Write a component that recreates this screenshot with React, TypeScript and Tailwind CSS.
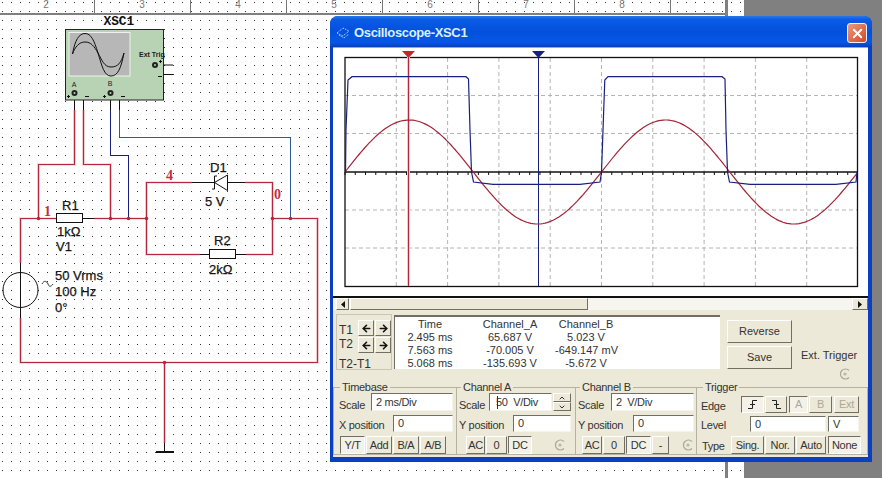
import { ArrowLeft, ArrowRight, ChevronDown, ChevronUp, X } from "lucide-react";
import type { ReactNode } from "react";

const RED = "#b3283c";
const GLOW = "#f9dede";
const NAVY = "#18207e";
const BLUE = "#2b5a9c";

const dots: [number, number][] = [];
for (let x = 2; x < 744; x += 9) {
  for (let y = 2; y < 478; y += 9) dots.push([x, y]);
}

const redWires = [
  "M74.5 110V164.5H38.5V218.5",
  "M83.5 110V164.5H110.5V218.5",
  "M20.5 263V218.5H56",
  "M94 218.5H146.5V182.5H192",
  "M245 182.5H272.5V254.5H246",
  "M200 254.5H146.5V218.5",
  "M272.5 218.5H317.5V362.5H20.5V318",
  "M164.5 362.5V443",
];

const blackWires = [
  "M74.5 93V110M74.5 93H83.5V110",
  "M110.5 93V110M110.5 93H119.5V110",
  "M155.5 65H173M155.5 65V74.5H173",
  "M192 182.5H214M228 182.5H245",
  "M82.5 218.5H94",
  "M200 254.5H209.5M235.5 254.5H246",
  "M20.5 263V318",
  "M164.5 443V451",
];

const junctions = [
  [38.5, 218.5],
  [110.5, 218.5],
  [128.5, 218.5],
  [146.5, 218.5],
  [272.5, 218.5],
  [290.5, 218.5],
  [164.5, 362.5],
];

const circuitLabels: [string, number, number][] = [
  ["R1", 62, 210],
  ["1kΩ", 57, 236],
  ["V1", 56, 251],
  ["50 Vrms", 55, 280],
  ["100 Hz", 55, 296],
  ["0°", 55, 312],
  ["D1", 210, 172],
  ["5 V", 205, 206],
  ["R2", 214, 245],
  ["2kΩ", 209, 274],
];

function sinePath() {
  const pts: string[] = [];
  for (let x = 345; x <= 857; x += 2) {
    const y = 172 - 52 * Math.sin(((x - 345) * 2 * Math.PI) / 256.5);
    pts.push(`${x} ${y.toFixed(1)}`);
  }
  return "M" + pts.join("L");
}

const squarePath =
  "M345.5 172L346 130L348 80L352 76.7H466L468.5 79L470 130L471.5 172L473.5 182L493 184.3H580L600 182L601.5 172L603 130L604.8 80L608 76.7H722L725 79L726 130L727.5 172L729.5 182L750 184.3H836L856 182L857 172";

const gridX = [396.3, 447.6, 498.9, 550.2, 601.5, 652.8, 704.1, 755.4, 806.7];
const gridY = [95.5, 133.5, 210, 248];
const ticks: number[] = [];
for (let x = 345; x < 857; x += 10.26) ticks.push(x);

const rows = [
  ["Time", "Channel_A", "Channel_B"],
  ["2.495 ms", "65.687 V", "5.023 V"],
  ["7.563 ms", "-70.005 V", "-649.147 mV"],
  ["5.068 ms", "-135.693 V", "-5.672 V"],
];

function Circuit() {
  return (
    <svg width={744} height={478} className="block">
      {dots.map(([x, y]) => (
        <rect key={`${x}-${y}`} x={x} y={y} width={1} height={1} fill="#333" />
      ))}

      {/* ruler */}
      {[94.5, 190.5, 286.5, 382.5, 478.5, 574.5, 670.5].map((x) => (
        <line key={x} x1={x} x2={x} y1={0} y2={13} stroke="#777" />
      ))}
      {[2, 3, 4, 5, 6, 7, 8].map((n, i) => (
        <text key={n} x={46 + i * 96} y={8} fontSize={10} fill="#777" textAnchor="middle" fontFamily="Liberation Sans">
          {n}
        </text>
      ))}
      <rect x={0} y={13} width={725} height={2} fill="#808080" />
      <rect x={725} y={0} width={3} height={478} fill="#808080" />

      {/* wires */}
      {redWires.map((d) => (
        <path key={d} d={d} fill="none" stroke={GLOW} strokeWidth={3} />
      ))}
      {redWires.map((d) => (
        <path key={d} d={d} fill="none" stroke={RED} strokeWidth={1.2} />
      ))}
      <path d="M110.5 110V155.5H128.5V218.5" fill="none" stroke={NAVY} />
      <path d="M119.5 110V137.5H290.5V218.5" fill="none" stroke={BLUE} />
      {blackWires.map((d) => (
        <path key={d} d={d} fill="none" stroke="#111" />
      ))}
      {junctions.map(([x, y]) => (
        <circle key={`${x}-${y}`} cx={x} cy={y} r={1.8} fill={RED} />
      ))}

      {/* scope symbol */}
      <rect x={65.5} y={29.5} width={98} height={70.5} fill="#b8d3b4" stroke="#222" />
      <rect x={69} y={32.5} width={61} height={43.5} fill="#b7b7b7" stroke="#eef2ee" />
      <path d="M72.5 54C75 40 79 33.5 85 33.5S94 40 98 53S104 76 111 76S121 68 124 53" fill="none" stroke="#111" />
      <path d="M72.5 54C75 47 79 42 85 42S94 46 98 53S104 67 111 67S121 63 124 53" fill="none" stroke="#111" />
      <text x={103.5} y={25} fontSize={12.8} fontWeight={700} fill="#111" fontFamily="Liberation Mono">
        XSC1
      </text>
      <text x={139} y={57} fontSize={7} fontWeight={700} fill="#222" fontFamily="Liberation Sans">
        Ext Trig
      </text>
      <text x={74} y={87} fontSize={7} fill="#222" textAnchor="middle" fontFamily="Liberation Sans">A</text>
      <text x={110} y={86} fontSize={7} fill="#222" textAnchor="middle" fontFamily="Liberation Sans">B</text>
      {[
        [74.5, 93],
        [110.5, 93],
        [155, 65],
      ].map(([x, y]) => (
        <g key={x}>
          <circle cx={x} cy={y} r={3} fill="#222" />
          <circle cx={x} cy={y} r={1} fill="#b8d3b4" />
        </g>
      ))}
      <path d="M67 96.5h3M68.5 95v3M103 96.5h3M104.5 95v3M159 61.5h3M160.5 60v3" stroke="#111" />
      <path d="M85 96.5h4M121 96.5h4M158 76.5h4" stroke="#111" strokeWidth={1.2} />

      {/* R1, R2 */}
      <rect x={56.5} y={213.5} width={26} height={9} fill="#fff" stroke="#111" />
      <rect x={209.5} y={249.5} width={26} height={9} fill="#fff" stroke="#111" />

      {/* zener */}
      <path d="M227.5 175V190.5L214.5 182.5ZM217 176H214.5V189H212" fill="#fff" stroke="#111" />

      {/* source */}
      <circle cx={20.5} cy={290} r={17.5} fill="none" stroke="#111" />
      <path d="M42 284C44 280 47 281 48 284S51 287 53 284" fill="none" stroke="#333" />

      {/* ground */}
      <rect x={156} y={451} width={18} height={2} fill="#111" />

      {circuitLabels.map(([t, x, y]) => (
        <text key={t} x={x} y={y} fontSize={13} fill="#111" stroke="#222" strokeWidth={0.25} fontFamily="Liberation Sans">
          {t}
        </text>
      ))}
      {[
        ["1", 44, 216],
        ["4", 166, 180],
        ["0", 274, 199],
      ].map(([t, x, y]) => (
        <text key={t} x={x} y={y} fontSize={14} fontWeight={700} fill="#c22f3d" fontFamily="Liberation Serif">
          {t}
        </text>
      ))}
    </svg>
  );
}

function Plot() {
  return (
    <svg width={535} height={249} viewBox="333 47 535 249" className="block bg-white">
      <line x1={333} x2={868} y1={47.5} y2={47.5} stroke="#aca899" />
      {gridX.map((x) => (
        <line key={x} x1={x} x2={x} y1={58} y2={286} stroke="#b4b4b4" strokeDasharray="4 3" />
      ))}
      {gridY.map((y) => (
        <line key={y} x1={345} x2={857} y1={y} y2={y} stroke="#b4b4b4" strokeDasharray="4 3" />
      ))}
      <rect x={345} y={57.5} width={512.5} height={229} fill="none" stroke="#111" strokeWidth={1.3} />
      <line x1={345} x2={857} y1={172} y2={172} stroke="#111" strokeWidth={1.4} />
      {ticks.map((x) => (
        <line key={x} x1={x} x2={x} y1={172} y2={175} stroke="#111" />
      ))}
      <line x1={408.5} x2={408.5} y1={57} y2={286} stroke="#f6c9c9" strokeWidth={3} />
      <line x1={408.5} x2={408.5} y1={57} y2={286} stroke={RED} />
      <line x1={538.5} x2={538.5} y1={57} y2={286} stroke={NAVY} />
      <path d="M402 51H415L408.5 58Z" fill="#c4252f" />
      <path d="M532 51H545L538.5 58Z" fill={NAVY} />
      <path d={sinePath()} fill="none" stroke="#a32236" strokeWidth={1.2} />
      <path d={squarePath} fill="none" stroke={NAVY} strokeWidth={1.2} />
    </svg>
  );
}

function Btn({ children, pressed, dim, className }: { children: ReactNode; pressed?: boolean; dim?: boolean; className: string }) {
  return (
    <div
      className={
        "flex shrink-0 items-center justify-center border text-[11px] " +
        (pressed
          ? "border-t-[#716f64] border-l-[#716f64] border-b-white border-r-white bg-[#f4f2e8] "
          : "border-t-white border-l-white border-b-[#716f64] border-r-[#716f64] bg-[#ece9d8] ") +
        (dim ? "text-[#aca899] " : "text-[#333] ") +
        className
      }
    >
      {children}
    </div>
  );
}

function Field({ children, className }: { children: ReactNode; className: string }) {
  return (
    <div className={"relative flex shrink-0 items-center border border-t-[#716f64] border-l-[#716f64] border-b-[#f5f3ea] border-r-[#f5f3ea] bg-white pl-1 text-[11px] text-[#333] " + className}>
      {children}
    </div>
  );
}

function Group({ title, left, className, children }: { title: string; left: string; className: string; children: ReactNode }) {
  return (
    <div className={"relative h-[68px] shrink-0 border border-[#b5b2a2] " + className}>
      <span className={"absolute -top-[8px] bg-[#ece9d8] px-[2px] text-[11px] leading-[14px] text-[#333] " + left}>{title}</span>
      {children}
    </div>
  );
}

function Radio() {
  return (
    <svg width={12} height={12} viewBox="0 0 12 12" className="shrink-0">
      <path d="M10 2.5A5 5 0 1 0 10 9.5" fill="none" stroke="#a9a799" strokeWidth={1.2} />
      <circle cx={6} cy={6} r={1.6} fill="#b9b7a8" />
    </svg>
  );
}

function EdgeIcon({ falling }: { falling?: boolean }) {
  return (
    <svg width={11} height={11} viewBox="0 0 11 11">
      <path d={falling ? "M1 1.5H5.5V9.5H10M3 5.5H8" : "M1 9.5H5.5V1.5H10M3 5.5H8"} fill="none" stroke="#222" />
    </svg>
  );
}

function Scope() {
  return (
    <div className="absolute left-[330px] top-[16px] flex h-[446px] w-[542px] flex-col rounded-t-[8px] bg-[#0a3fc4]">
      {/* title bar */}
      <div className="flex h-[31px] shrink-0 items-center rounded-t-[8px] bg-[linear-gradient(180deg,#2a78e8_0%,#0a5be6_12%,#0350dd_50%,#0458e6_85%,#0a3fb8_100%)] pl-[6px] pr-[5px] pt-[3px]">
        <svg width={14} height={12} viewBox="0 0 14 12" className="shrink-0">
          <path d="M1 6L7 1L13 4L7 9ZM3 8L8 11L13 7" fill="none" stroke="#cfe2f8" strokeDasharray="1 1" />
        </svg>
        <span className="ml-[4px] text-[13px] font-bold tracking-[-0.35px] text-[#dcefff]">Oscilloscope-XSC1</span>
        <div className="ml-auto flex h-[20px] w-[20px] items-center justify-center rounded-[3px] border border-[#f2f2f2] bg-[linear-gradient(135deg,#e99b80,#cf4a26)]">
          <X size={15} strokeWidth={3} color="#fff" />
        </div>
      </div>

      <div className="ml-[3px] mr-[4px] flex h-[410px] flex-col bg-[#ece9d8]">
        <Plot />
        <div className="h-[2px] bg-[#111]" />
        {/* scrollbar */}
        <div className="flex h-[12px] items-stretch bg-[#f6f5ef]">
          <Btn className="ml-[3px] w-[13px]">
            <svg width={4} height={7} viewBox="0 0 4 7"><path d="M4 0V7L0 3.5Z" fill="#111" /></svg>
          </Btn>
          <div className="ml-[1px] w-[238px] border border-t-white border-l-white border-b-[#716f64] border-r-[#716f64] bg-[#ece9d8]" />
          <Btn className="ml-auto w-[16px]">
            <svg width={4} height={7} viewBox="0 0 4 7"><path d="M0 0V7L4 3.5Z" fill="#111" /></svg>
          </Btn>
        </div>

        {/* readout */}
        <div className="ml-[3px] mt-[4px] flex h-[56px] shrink-0 text-[11px] text-[#333]">
          <div className="w-[56px] shrink-0 border border-[#c9c6b4] pl-[2px] pt-[5px]">
            <div className="flex h-[16px] items-center">
              <span className="w-[19px] pt-[3px] text-[12px]">T1</span>
              <Btn className="h-[16px] w-[16px]"><ArrowLeft size={11} strokeWidth={3.5} color="#111" /></Btn>
              <Btn className="ml-[1px] h-[16px] w-[16px]"><ArrowRight size={11} strokeWidth={3.5} color="#111" /></Btn>
            </div>
            <div className="mt-[1px] flex h-[16px] items-center">
              <span className="w-[19px] pb-[2px] text-[12px]">T2</span>
              <Btn className="h-[16px] w-[16px]"><ArrowLeft size={11} strokeWidth={3.5} color="#111" /></Btn>
              <Btn className="ml-[1px] h-[16px] w-[16px]"><ArrowRight size={11} strokeWidth={3.5} color="#111" /></Btn>
            </div>
            <div className="mt-[4px] text-[12px] leading-[14px]">T2-T1</div>
          </div>
          <div className="ml-[2px] mt-[1px] grid h-[54px] w-[326px] shrink-0 grid-cols-[70px_90px_62px] content-start border-t-2 border-l border-t-[#716f64] border-l-[#716f64] bg-white pt-[1px] text-center leading-[13px]">
            {rows.flat().map((c) => (
              <div key={c} className="whitespace-nowrap">{c}</div>
            ))}
          </div>
          <div className="ml-[7px] mt-[6px] flex w-[65px] shrink-0 flex-col gap-[3px]">
            <Btn className="h-[23px] w-[65px]">Reverse</Btn>
            <Btn className="h-[23px] w-[65px]">Save</Btn>
          </div>
          <div className="ml-[9px] flex flex-col items-start pt-[35px]">
            <span className="whitespace-nowrap text-[11px] leading-[13px]">Ext. Trigger</span>
            <div className="ml-[38px] mt-[6px]"><Radio /></div>
          </div>
        </div>

        {/* controls */}
        <div className="mt-[17px] flex text-[11px] tracking-[-0.3px] text-[#333]">
          <Group title="Timebase" left="left-[6px]" className="w-[124px]">
            <div className="mt-[5px] flex h-[18px] items-center pl-[5px]">
              <span className="w-[32px] pt-[6px]">Scale</span>
              <Field className="h-[18px] w-[82px]">2 ms/Div</Field>
            </div>
            <div className="mt-[4px] flex h-[17px] items-center pl-[5px]">
              <span className="w-[54px] pt-[4px]">X position</span>
              <Field className="h-[17px] w-[60px]">0</Field>
            </div>
            <div className="mt-[4px] flex h-[18px] items-center gap-[1px] pl-[6px]">
              <Btn pressed className="h-[18px] w-[25px]">Y/T</Btn>
              <Btn className="h-[18px] w-[26px]">Add</Btn>
              <Btn className="h-[18px] w-[26px]">B/A</Btn>
              <Btn className="h-[18px] w-[26px]">A/B</Btn>
            </div>
          </Group>

          <Group title="Channel A" left="left-[4px]" className="w-[119px] border-l-0">
            <div className="mt-[5px] flex h-[18px] items-center pl-[2px]">
              <span className="w-[30px] pt-[6px]">Scale</span>
              <Field className="h-[18px] w-[63px]">
                <span className="ml-[2px]">50&nbsp; V/Div</span>
                <span className="absolute left-[7px] top-[2px] h-[13px] w-px bg-[#333]" />
              </Field>
              <div className="ml-[1px] flex w-[18px] flex-col">
                <Btn className="h-[9px] w-[18px]"><ChevronUp size={8} strokeWidth={3} /></Btn>
                <Btn className="h-[9px] w-[18px]"><ChevronDown size={8} strokeWidth={3} /></Btn>
              </div>
            </div>
            <div className="mt-[4px] flex h-[17px] items-center pl-[2px]">
              <span className="w-[54px] pt-[4px]">Y position</span>
              <Field className="h-[17px] w-[58px]">0</Field>
            </div>
            <div className="mt-[4px] flex h-[18px] items-center gap-[1px] pl-[9px]">
              <Btn className="h-[18px] w-[19px]">AC</Btn>
              <Btn className="h-[18px] w-[21px]">0</Btn>
              <Btn pressed className="h-[18px] w-[24px]">DC</Btn>
              <div className="ml-[21px]"><Radio /></div>
            </div>
          </Group>

          <Group title="Channel B" left="left-[4px]" className="w-[121px] border-l-0">
            <div className="mt-[5px] flex h-[18px] items-center pl-[2px]">
              <span className="w-[33px] pt-[6px]">Scale</span>
              <Field className="h-[18px] w-[83px]">2&nbsp; V/Div</Field>
            </div>
            <div className="mt-[4px] flex h-[17px] items-center pl-[2px]">
              <span className="w-[55px] pt-[4px]">Y position</span>
              <Field className="h-[17px] w-[61px]">0</Field>
            </div>
            <div className="mt-[4px] flex h-[18px] items-center gap-[1px] pl-[6px]">
              <Btn className="h-[18px] w-[20px]">AC</Btn>
              <Btn className="h-[18px] w-[22px]">0</Btn>
              <Btn pressed className="h-[18px] w-[25px]">DC</Btn>
              <Btn className="h-[18px] w-[17px]">-</Btn>
              <div className="ml-[12px]"><Radio /></div>
            </div>
          </Group>

          <Group title="Trigger" left="left-[6px]" className="w-[171px] border-l-0">
            <div className="mt-[8px] flex h-[17px] items-center pl-[4px]">
              <span className="w-[40px] pt-[3px]">Edge</span>
              <Btn pressed className="h-[17px] w-[23px]"><EdgeIcon /></Btn>
              <Btn className="ml-[1px] h-[17px] w-[22px]"><EdgeIcon falling /></Btn>
              <Btn pressed dim className="ml-[2px] h-[17px] w-[19px]">A</Btn>
              <Btn dim className="ml-[1px] h-[17px] w-[23px]">B</Btn>
              <Btn dim className="ml-[2px] h-[17px] w-[25px]">Ext</Btn>
            </div>
            <div className="mt-[3px] flex h-[16px] items-center pl-[4px]">
              <span className="w-[49px] pt-[2px]">Level</span>
              <Field className="h-[16px] w-[76px]">0</Field>
              <Field className="ml-[2px] h-[16px] w-[31px]">V</Field>
            </div>
            <div className="mt-[4px] flex h-[18px] items-center pl-[5px]">
              <span className="w-[29px] pt-[2px]">Type</span>
              <Btn className="h-[18px] w-[33px]">Sing.</Btn>
              <Btn className="ml-[1px] h-[18px] w-[30px]">Nor.</Btn>
              <Btn className="ml-[1px] h-[18px] w-[30px]">Auto</Btn>
              <Btn pressed className="ml-[2px] h-[18px] w-[33px]">None</Btn>
            </div>
          </Group>
        </div>
      </div>
    </div>
  );
}

export default function App() {
  return (
    <div className="relative flex h-[478px] w-[882px] overflow-hidden bg-[#808080] font-['Liberation_Sans',sans-serif]">
      <div className="h-full w-[744px] bg-white">
        <Circuit />
      </div>
      <Scope />
    </div>
  );
}
